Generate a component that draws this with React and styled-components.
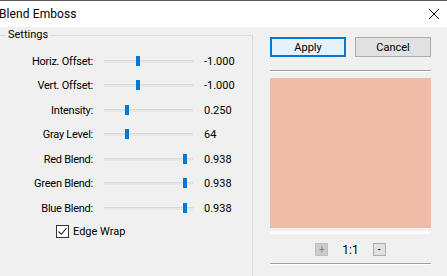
import React from 'react';
import styled, { createGlobalStyle } from 'styled-components';

const Global = createGlobalStyle`
  html, body {
    margin: 0;
    padding: 0;
    background: #f0f0f0;
    overflow: hidden;
  }
  body {
    font-family: Roboto, "Liberation Sans", sans-serif;
    font-size: 11px;
    color: #000;
  }
`;

const Window = styled.div`
  width: 447px;
  height: 276px;
  display: flex;
  flex-direction: column;
  background: #f0f0f0;
  overflow: hidden;
`;

const TitleBar = styled.div`
  height: 27px;
  flex: none;
  background: #fff;
  border-top: 1px solid #5e5a58;
  box-sizing: border-box;
  display: flex;
  align-items: center;
  justify-content: space-between;
  padding: 0 6px 0 0;
`;

const Title = styled.div`
  font-size: 12px;
  margin-left: -1px;
  letter-spacing: 0.1px;
`;

const Close = styled.div`
  width: 12px;
  height: 12px;
  display: flex;
  margin-right: 1px;
`;

const Body = styled.div`
  flex: 1;
  display: flex;
  min-height: 0;
`;

const Group = styled.fieldset`
  margin: 0 0 0 -2px;
  padding: 0;
  width: 255px;
  box-sizing: border-box;
  border: 1px solid #dcdcdc;
  border-bottom: none;
  height: 300px;
`;

const Legend = styled.legend`
  margin-left: 7px;
  padding: 0 2px;
  font-size: 11px;
  line-height: 16px;
`;

const Rows = styled.div`
  display: flex;
  flex-direction: column;
  padding-top: 6px;
`;

const Row = styled.div`
  height: 24.5px;
  flex: none;
  display: grid;
  grid-template-columns: 94px 100px auto;
  align-items: center;
`;

const Label = styled.div`
  text-align: right;
  letter-spacing: -0.25px;
`;

const Track = styled.div`
  position: relative;
  margin-left: 11px;
  height: 3px;
  background: #e7e7e7;
  border-top: 1px solid #d8d8d8;
  box-sizing: border-box;
`;

const Thumb = styled.div`
  position: absolute;
  top: -5px;
  width: 4px;
  height: 10px;
  margin-left: -2px;
  background: #0078d7;
`;

const Value = styled.div`
  padding-left: 11px;
`;

const CheckRow = styled.label`
  display: flex;
  align-items: center;
  gap: 4px;
  margin: 4px 0 0 57px;
`;

const Box = styled.div`
  width: 13px;
  height: 13px;
  box-sizing: border-box;
  border: 1px solid #333;
  background: #fff;
  display: flex;
  align-items: center;
  justify-content: center;
`;

const Side = styled.div`
  width: 161px;
  margin-left: 17px;
  display: flex;
  flex-direction: column;
  padding-top: 10px;
`;

const Buttons = styled.div`
  display: flex;
  gap: 9px;
`;

const Button = styled.div`
  width: 76px;
  height: 20px;
  box-sizing: border-box;
  display: flex;
  align-items: center;
  justify-content: center;
  background: ${p => (p.$default ? '#e5f1fb' : '#e1e1e1')};
  border: ${p => (p.$default ? '2px solid #0078d7' : '1px solid #adadad')};
`;

const Rule = styled.div`
  height: 1px;
  background: #a0a0a0;
  border-bottom: 1px solid #fff;
  margin-top: ${p => p.$top}px;
`;

const Preview = styled.div`
  margin-top: 6px;
  height: 150px;
  background: #f1bca7;
`;

const PreviewEdge = styled.div`
  margin-top: 3px;
  height: 3px;
  background: #f9fbfd;
`;

const ZoomBar = styled.div`
  display: flex;
  align-items: center;
  justify-content: center;
  gap: 14px;
  margin-top: 9px;
  height: 13px;
`;

const ZoomBtn = styled.div`
  width: 13px;
  height: 13px;
  box-sizing: border-box;
  display: flex;
  align-items: center;
  justify-content: center;
  font-size: 10px;
  line-height: 1;
  background: ${p => (p.$off ? '#cccccc' : '#e1e1e1')};
  border: 1px solid ${p => (p.$off ? '#bfbfbf' : '#adadad')};
  color: ${p => (p.$off ? '#838383' : '#000')};
`;

const Ratio = styled.div`
  font-size: 12px;
`;

const settings = [
  { label: 'Horiz. Offset:', value: '-1.000', pos: 0.38 },
  { label: 'Vert. Offset:', value: '-1.000', pos: 0.38 },
  { label: 'Intensity:', value: '0.250', pos: 0.26 },
  { label: 'Gray Level:', value: '64', pos: 0.26 },
  { label: 'Red Blend:', value: '0.938', pos: 0.91 },
  { label: 'Green Blend:', value: '0.938', pos: 0.91 },
  { label: 'Blue Blend:', value: '0.938', pos: 0.91 },
];

export default function App() {
  return (
    <Window>
      <Global />
      <TitleBar>
        <Title>Blend Emboss</Title>
        <Close>
          <svg width="12" height="12" viewBox="0 0 12 12">
            <path d="M1 1 L11 11 M11 1 L1 11" stroke="#111" strokeWidth="1" />
          </svg>
        </Close>
      </TitleBar>
      <Body>
        <Group>
          <Legend>Settings</Legend>
          <Rows>
            {settings.map(s => (
              <Row key={s.label}>
                <Label>{s.label}</Label>
                <Track>
                  <Thumb style={{ left: `${s.pos * 100}%` }} />
                </Track>
                <Value>{s.value}</Value>
              </Row>
            ))}
          </Rows>
          <CheckRow>
            <Box>
              <svg width="9" height="9" viewBox="0 0 9 9">
                <path d="M0.5 4.5 L3.3 7.3 L8.5 1.2" fill="none" stroke="#222" strokeWidth="1.1" />
              </svg>
            </Box>
            Edge Wrap
          </CheckRow>
        </Group>
        <Side>
          <Buttons>
            <Button $default>Apply</Button>
            <Button>Cancel</Button>
          </Buttons>
          <Rule $top={13} />
          <Preview />
          <PreviewEdge />
          <ZoomBar>
            <ZoomBtn $off>+</ZoomBtn>
            <Ratio>1:1</Ratio>
            <ZoomBtn>-</ZoomBtn>
          </ZoomBar>
          <Rule $top={7} />
        </Side>
      </Body>
    </Window>
  );
}
